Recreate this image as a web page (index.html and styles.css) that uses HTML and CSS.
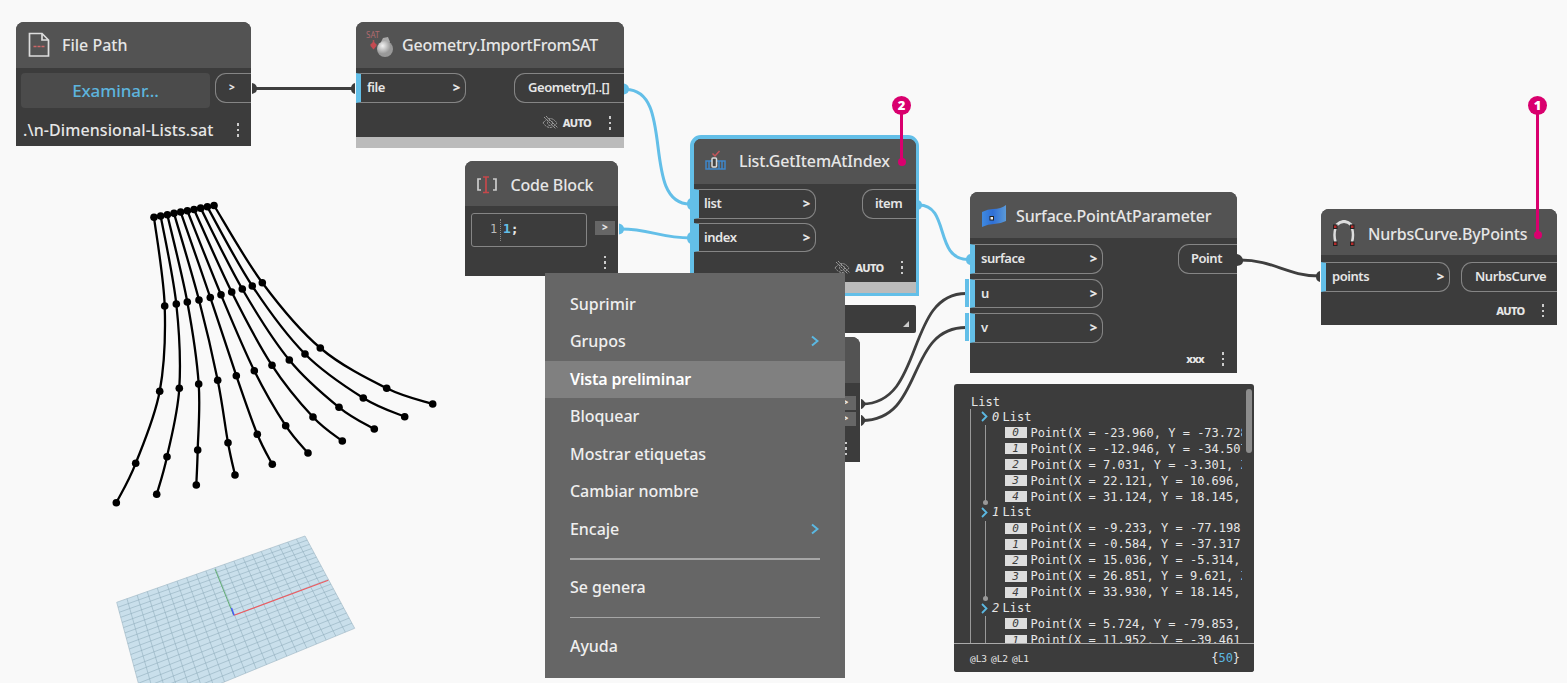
FILE: index.html
```html
<!DOCTYPE html>
<html lang="es">
<head>
<meta charset="utf-8">
<title>Dynamo</title>
<link rel="stylesheet" href="styles.css">
</head>
<body>
<main class="workspace">
  <svg class="layer" viewBox="0 0 1567 683" width="1567" height="683">
    <g id="plane"></g>
    <g id="curves"></g>
    <g class="wires">
      <path d="M253 88.5H354"/>
      <path class="blue" d="M626 89.500C676 89.500 640 204 690 204"/>
      <path class="blue" d="M621 229C650 229 660 238 691 238"/>
      <path class="blue" d="M919 205C950 205 934 259.500 968 259.500"/>
      <path d="M1240 260C1275 260 1286 276 1320 276"/>
      <path d="M862 404C925 404 905 293.500 966 293.500"/>
      <path d="M862 420.500C925 420.500 905 327.500 966 327.500"/>
    </g>
    <g class="nubs">
      <path d="M252 83q5 1 5 5.500t-5 5.500z"/>
      <path d="M355 83q-4 1-4 5.500t4 5.500z"/>
      <path d="M1237 254q5 1 6 6t-6 6z"/>
      <path d="M1320 271q-4 1-4 5.500t4 5.500z"/>
      <path d="M861 399q2 0 5 5q-3 5-5 5z"/>
      <path d="M861 415q2 0 5 5.500q-3 5-5 5.500z"/>
      <path class="blue" d="M624 83.500q5 1 5 5.500t-5 5.500z"/>
      <path class="blue" d="M619 223.500q5 1 5 5.500t-5 5.500z"/>
      <path class="blue" d="M691 198q-4 1-4 6t4 6z"/>
      <path class="blue" d="M691 232q-4 1-4 6t4 6z"/>
      <path class="blue" d="M918 200q4 1 4 5t-4 5z"/>
      <path class="blue" d="M970 254q-4 1-4 5.500t4 5.500z"/>
    </g>
  </svg>

  <section class="node file-path">
    <header class="head">
      <svg class="icon" width="22" height="26" viewBox="0 0 22 26"><path d="M1.500 1.500H14L20.500 8V24H1.500Z M14 1.500V8H20.500" fill="none" stroke="#ddd" stroke-width="1.700"/><path d="M5.500 14.500H17" stroke="#c66" stroke-width="1.500" stroke-dasharray="3 1"/></svg>
      <h2 class="title">File Path</h2>
    </header>
    <div class="path-row"><button class="browse">Examinar...</button><span class="port out arrow">&gt;</span></div>
    <div class="path-foot"><span class="path-text">.\n-Dimensional-Lists.sat</span><i class="dots"></i></div>
  </section>

  <section class="node import-sat">
    <header class="head">
      <svg class="icon" width="32" height="32" viewBox="0 0 32 32"><defs><radialGradient id="ball" cx=".35" cy=".3"><stop offset="0" stop-color="#f2f2f2"/><stop offset="1" stop-color="#999"/></radialGradient></defs><text class="sat" x="0" y="9">SAT</text><path d="M7.500 11v5" stroke="#a55" stroke-width="1.500"/><path d="M4.500 15.500L7.500 12.500L10.500 15.500V17L7.500 20.500L4.500 17Z" fill="#c44a50"/><path d="M15 13l2-4 5-1 2 5-2 3h-7z" fill="#aaa"/><circle cx="19" cy="20" r="8" fill="url(#ball)"/></svg>
      <h2 class="title">Geometry.ImportFromSAT</h2>
    </header>
    <div class="ports"><span class="port in">file<b>&gt;</b></span><span class="port out">Geometry[]..[]</span></div>
    <div class="foot"><svg class="eye" width="16" height="14" viewBox="0 0 16 14"><path d="M1 7Q8-2 15 7Q8 16 1 7Z M2 1L14 13 M4 0L16 12"/><circle cx="8" cy="7" r="2.500"/></svg><strong class="lacing">AUTO</strong><i class="dots"></i></div>
    <div class="shelf"></div>
  </section>

  <section class="node code-block">
    <header class="head">
      <svg class="icon" width="22" height="20" viewBox="0 0 22 20"><path d="M5 4H2V15H5 M17 4H20V15H17" fill="none" stroke="#ccc" stroke-width="1.700"/><path d="M7 2H13M7 17.500H13M10 2V17.500" stroke="#c5484b" stroke-width="1.700"/></svg>
      <h2 class="title">Code Block</h2>
    </header>
    <div class="code-row"><div class="editor"><span class="line-no">1</span><span class="code"><em>1</em>;</span></div><span class="chip">&gt;</span></div>
    <div class="code-foot"><i class="dots"></i></div>
  </section>

  <section class="node get-item">
    <header class="head">
      <svg class="icon" width="22" height="22" viewBox="0 0 22 22"><path d="M1 11H20V19H1Z M4 11V19 M14 11V19 M17 11V19" fill="none" stroke="#3f86c9" stroke-width="1.500"/><rect x="7" y="8" width="4.500" height="9" rx="1" fill="#444" stroke="#ddd" stroke-width="1.500"/><path d="M7.500 3.500L10 6L14.500 1" fill="none" stroke="#c5555a" stroke-width="1.500"/></svg>
      <h2 class="title">List.GetItemAtIndex</h2>
    </header>
    <div class="ports"><div class="inputs"><span class="port in">list<b>&gt;</b></span><span class="port in">index<b>&gt;</b></span></div><span class="port out">item</span></div>
    <div class="foot"><svg class="eye" width="16" height="14" viewBox="0 0 16 14"><path d="M1 7Q8-2 15 7Q8 16 1 7Z M2 1L14 13 M4 0L16 12"/><circle cx="8" cy="7" r="2.500"/></svg><strong class="lacing">AUTO</strong><i class="dots"></i></div>
    <div class="shelf"></div>
  </section>

  <div class="preview-stub"><svg width="6" height="6" viewBox="0 0 6 6"><path d="M6 0V6H0Z" fill="#ccc"/></svg></div>

  <section class="node hidden-block">
    <header class="head"></header>
    <div class="chips"><span class="chip">&gt;</span><span class="chip">&gt;</span></div>
    <div class="code-foot"><i class="dots"></i></div>
  </section>

  <section class="node point-at">
    <header class="head">
      <svg class="icon" width="26" height="24" viewBox="0 0 26 24"><defs><linearGradient id="surf"><stop offset="0" stop-color="#3f8ae0"/><stop offset=".45" stop-color="#2f6fd6"/><stop offset="1" stop-color="#5b9ad8"/></linearGradient></defs><path d="M1 8Q7 5 12 5Q20 5 25 1V17Q19 20 13 20Q7 20 1 23Z" fill="url(#surf)"/><rect x="9" y="12.500" width="3.500" height="3.500" fill="#eee" stroke="#222"/></svg>
      <h2 class="title">Surface.PointAtParameter</h2>
    </header>
    <div class="ports"><div class="inputs"><span class="port in">surface<b>&gt;</b></span><span class="port in default">u<b>&gt;</b></span><span class="port in default">v<b>&gt;</b></span></div><span class="port out">Point</span></div>
    <div class="foot"><strong class="lacing">xxx</strong><i class="dots"></i></div>
  </section>

  <section class="node by-points">
    <header class="head">
      <svg class="icon" width="24" height="28" viewBox="0 0 24 28"><path d="M4.500 5Q12-2 19.500 5" fill="none" stroke="#ddd" stroke-width="3"/><path d="M3.500 8Q1.500 15 3.500 22 M20 8Q22 15 20 22" fill="none" stroke="#ddd" stroke-width="2.500"/><g fill="#b52b2b" stroke="#222"><rect x="1.500" y="5" width="3.500" height="3.500"/><rect x="18.500" y="5" width="3.500" height="3.500"/><rect x="1.500" y="22" width="3.500" height="3.500"/><rect x="18.500" y="22" width="3.500" height="3.500"/></g></svg>
      <h2 class="title">NurbsCurve.ByPoints</h2>
    </header>
    <div class="ports"><span class="port in">points<b>&gt;</b></span><span class="port out">NurbsCurve</span></div>
    <div class="foot"><strong class="lacing">AUTO</strong><i class="dots"></i></div>
  </section>

  <section class="watch">
    <div class="tree">
      <div class="root">List</div>
      <div class="groups">
        <div class="group"><div class="g-head"><svg width="7" height="11" viewBox="0 0 7 11"><path d="M1 1L5.500 5.500L1 10"/></svg><i>0</i>List</div>
          <ol><li><i>0</i>Point(X = -23.960, Y = -73.728</li><li><i>1</i>Point(X = -12.946, Y = -34.507</li><li><i>2</i>Point(X = 7.031, Y = -3.301, Z</li><li><i>3</i>Point(X = 22.121, Y = 10.696,</li><li><i>4</i>Point(X = 31.124, Y = 18.145,</li></ol></div>
        <div class="group"><div class="g-head"><svg width="7" height="11" viewBox="0 0 7 11"><path d="M1 1L5.500 5.500L1 10"/></svg><i>1</i>List</div>
          <ol><li><i>0</i>Point(X = -9.233, Y = -77.198</li><li><i>1</i>Point(X = -0.584, Y = -37.317</li><li><i>2</i>Point(X = 15.036, Y = -5.314,</li><li><i>3</i>Point(X = 26.851, Y = 9.621, Z</li><li><i>4</i>Point(X = 33.930, Y = 18.145,</li></ol></div>
        <div class="group"><div class="g-head"><svg width="7" height="11" viewBox="0 0 7 11"><path d="M1 1L5.500 5.500L1 10"/></svg><i>2</i>List</div>
          <ol><li><i>0</i>Point(X = 5.724, Y = -79.853,</li><li><i>1</i>Point(X = 11.952, Y = -39.461</li></ol></div>
      </div>
    </div>
    <i class="thumb"></i>
    <footer class="levels"><span>@L3</span><span>@L2</span><span>@L1</span><span class="count">{<em>50</em>}</span></footer>
  </section>

  <nav class="menu">
    <div class="item">Suprimir</div>
    <div class="item">Grupos<svg width="8" height="12" viewBox="0 0 8 12"><path d="M1 1.500L6.500 6L1 10.500"/></svg></div>
    <div class="item active">Vista preliminar</div>
    <div class="item">Bloquear</div>
    <div class="item">Mostrar etiquetas</div>
    <div class="item">Cambiar nombre</div>
    <div class="item">Encaje<svg width="8" height="12" viewBox="0 0 8 12"><path d="M1 1.500L6.500 6L1 10.500"/></svg></div>
    <hr>
    <div class="item">Se genera</div>
    <hr>
    <div class="item">Ayuda</div>
  </nav>

  <div class="callout two"><span>2</span></div>
  <div class="callout one"><span>1</span></div>
</main>
<script src="scene.js"></script>
</body>
</html>
```
FILE: styles.css
```css
* { box-sizing: border-box; }
body { margin: 0; background: #f9f9f9; font-family: "Noto Sans", "Open Sans", sans-serif; }
.workspace { position: relative; width: 1567px; height: 683px; overflow: hidden; }
.layer { position: absolute; left: 0; top: 0; }
.wires path { fill: none; stroke: #3f3f3f; stroke-width: 2.8; }
.wires .blue { stroke: #63bfe8; stroke-width: 3; }
.nubs path { fill: #3c3c3c; }
.nubs .blue { fill: #63bfe8; }
.curve { fill: none; stroke: #000; stroke-width: 2.3; }
.plane { fill: #c9dfeb; stroke: #a5bcc8; stroke-width: .7; }
.grid { fill: none; stroke: #8eabba; stroke-width: .55; }

.node { position: absolute; display: flex; flex-direction: column; background: #3c3c3c; border-radius: 8px 8px 0 0; color: #e6e6e6; }
.head { height: 46px; flex: none; background: #535353; border-radius: 8px 8px 0 0; display: flex; align-items: center; }
.title { margin: 0; font-size: 16px; font-weight: 500; letter-spacing: -.17px; line-height: 24px; white-space: nowrap; color: #e6e6e6; }
.icon { flex: none; }
.ports { display: flex; justify-content: space-between; align-items: flex-start; padding-top: 5px; }
.inputs { display: flex; flex-direction: column; gap: 5px; }
.port { height: 29.500px; border: 1.500px solid #858585; display: flex; align-items: center; font-size: 13px; font-weight: 600; letter-spacing: -.45px; line-height: 16px; white-space: nowrap; }
.port.in { width: 110px; border-left: 5px solid #63bfe8; border-radius: 0 11px 11px 0; padding: 0 5px 1px 6px; justify-content: space-between; }
.port.out { border-right: 0; border-radius: 11px 0 0 11px; padding: 0 0 1px 13px; }
.port b { font-size: 13px; }
.default { position: relative; }
.default::before { content: ""; position: absolute; left: -10px; top: -1px; width: 3.500px; height: 28px; background: #63bfe8; }
.foot { display: flex; align-items: center; justify-content: flex-end; height: 34px; padding: 6px 13px 0 0; }
.lacing { font-size: 11px; font-weight: 800; letter-spacing: -.7px; margin: 0 17.500px 0 5px; line-height: 14px; }
.eye { fill: none; stroke: #999; stroke-width: 1; stroke-dasharray: 2.500 .8; }
.dots { width: 2px; height: 14px; flex: none; background: linear-gradient(#ccc 0 2.500px, transparent 2.500px 5.500px, #ccc 5.500px 8px, transparent 8px 11px, #ccc 11px 13.500px, transparent 13.500px); }
.shelf { height: 11px; flex: none; background: #bbb; margin-top: auto; }

.file-path { left: 16px; top: 22px; width: 235px; height: 124px; }
.file-path .head { padding-left: 12px; gap: 12px; }
.file-path .title { letter-spacing: 0; }
.path-row { display: flex; justify-content: space-between; padding: 5px 0 0 5px; }
.browse { width: 189px; height: 35px; border: 0; border-radius: 4px; background: #4b4b4b; color: #5db4dd; font: 500 17px/32px "Noto Sans", sans-serif; padding: 0; letter-spacing: -.1px; }
.port.arrow { width: 36px; padding-left: 13px; font-size: 10px; font-weight: 800; }
.path-foot { display: flex; justify-content: space-between; align-items: center; padding: 7px 12.500px 0 7px; font-size: 16px; font-weight: 500; line-height: 30px; }
.path-text { letter-spacing: .08px; }

.import-sat { left: 356px; top: 22px; width: 267.500px; height: 126px; }
.import-sat .head { padding-left: 10px; gap: 4px; }
.import-sat .title { letter-spacing: -.2px; }
.sat { font: 8px "Noto Sans", sans-serif; fill: #b06a6e; }
.import-sat .out { width: 109.500px; }

.code-block { left: 465px; top: 161px; width: 153px; height: 115px; }
.code-block .head { height: 45px; padding: 2px 0 0 11px; gap: 12.500px; }
.code-row { display: flex; gap: 8px; padding: 7px 0 0 6px; }
.editor { width: 116px; height: 34px; border: 1.500px solid #858585; border-radius: 3px; padding: 5px 0 0 18px; font: 12px/20px "DejaVu Sans Mono", monospace; display: flex; }
.line-no { color: #bbb; width: 11px; border-right: 1px dotted #888; height: 22px; }
.code { padding-left: 2px; font-weight: 700; font-size: 13px; }
.code em { font-style: normal; color: #63bfe8; }
.chip { width: 20px; height: 14px; background: #666; margin-top: 7.500px; font-size: 10px; font-weight: 800; line-height: 13px; text-align: center; }
.code-foot { display: flex; justify-content: flex-end; padding: 9px 12.500px 0 0; }

.get-item { left: 690px; top: 135px; width: 229px; height: 161px; border: 4px solid #63bfe8; border-right-width: 3px; border-bottom-width: 3px; border-radius: 11px 11px 0 0; }
.get-item .head { height: 45px; padding: 0 0 2px 11px; gap: 12px; border-radius: 7px 7px 0 0; }
.get-item .title { letter-spacing: -.12px; }
.get-item .inputs { gap: 4px; }
.get-item .in { width: 122px; padding-left: 5px; }
.get-item .out { width: 54px; padding-left: 12px; }
.get-item .foot { height: 29px; padding: 2px 13px 0 0; }

.preview-stub { position: absolute; left: 700px; top: 305px; width: 216px; height: 28px; background: #3c3c3c; border-radius: 2px; display: flex; justify-content: flex-end; align-items: flex-end; padding: 0 7px 6px 0; }

.hidden-block { left: 700px; top: 337px; width: 159.500px; height: 125px; }
.chips { display: flex; flex-direction: column; align-items: flex-end; gap: 2px; padding: 13px 4px 0 0; }
.chips .chip { margin: 0; }
.hidden-block .code-foot { padding-top: 16px; }

.point-at { left: 970px; top: 192px; width: 267px; height: 181px; }
.point-at .head { padding: 2px 0 0 11px; gap: 9px; }
.point-at .ports { padding-top: 6px; }
.point-at .in { width: 133px; }
.point-at .out { width: 59px; padding-left: 12px; }
.point-at .foot { height: 28px; padding-top: 4px; }
.point-at .lacing { margin-right: 18px; }

.by-points { left: 1321px; top: 209px; width: 236px; height: 115.500px; }
.by-points .head { padding: 3px 0 0 11px; gap: 12px; }
.by-points .ports { padding-top: 7px; }
.by-points .in { width: 129px; }
.by-points .out { width: 96px; }
.by-points .foot { height: 32px; }

.watch { position: absolute; left: 954px; top: 384px; width: 300px; height: 288px; background: #3c3c3c; border-radius: 3px; color: #e6e6e6; font: 12px/16px "DejaVu Sans Mono", monospace; }
.tree { height: 259px; width: 289px; padding: 10px 0 0 16px; overflow: hidden; }
.root { letter-spacing: .05px; height: 15px; padding-left: 1px; }
.groups { border-left: 1px solid #999; padding-left: 10px; }
.group { position: relative; }
.group::before { content: ""; position: absolute; left: 4px; top: 16px; height: 78px; border-left: 1px solid #999; }
.group::after { content: ""; position: absolute; left: 2px; top: 91px; width: 5px; height: 5px; border-radius: 50%; background: #999; }
.g-head { display: flex; align-items: center; height: 15.500px; }
.g-head svg { fill: none; stroke: #5bb8e2; stroke-width: 1.800; margin-right: 4px; }
.g-head i { width: 10.500px; }
.group ol { list-style: none; margin: 0; padding: 0 0 0 23.500px; }
.group li { display: flex; align-items: center; gap: 4px; white-space: nowrap; height: 16.050px; width: 237px; overflow: hidden; letter-spacing: .02px; }
.group li i { flex: none; width: 22px; height: 11px; line-height: 11px; background: #ddd; color: #3c3c3c; font-size: 11px; text-align: center; }
.thumb { position: absolute; right: 2px; top: 5px; width: 6px; height: 64px; border-radius: 3px; background: #8c8c8c; }
.levels { position: relative; height: 29px; border-top: 1.500px solid #aaa; background: #3c3c3c; display: flex; gap: 4px; padding: 7px 14px 0 16px; font-size: 9.500px; letter-spacing: -.05px; border-radius: 0 0 3px 3px; }
.count { margin-left: auto; font-size: 12px; line-height: 15px; }
.count em { font-style: normal; color: #5bb8e2; }

.menu { position: absolute; left: 545px; top: 273px; width: 299.500px; height: 405px; background: #666; padding-top: 12.500px; color: #efefef; font-size: 16px; font-weight: 500; letter-spacing: -.04px; }
.item { display: flex; align-items: center; justify-content: space-between; height: 37.500px; padding: 0 25px 1.500px; }
.item svg { fill: none; stroke: #5bb8e2; stroke-width: 2; margin-right: 1px; }
.active { background: #808080; color: #fff; font-weight: 600; letter-spacing: -.18px; }
.menu hr { border: 0; height: 1.500px; background: #a6a6a6; margin: 10px 25px 9.500px; }

.callout { position: absolute; width: 19px; }
.callout span { display: block; width: 19px; height: 19px; border-radius: 50%; background: #d9006e; color: #fff; font: 800 13px/19px "Open Sans", sans-serif; text-align: center; position: relative; z-index: 1; }
.callout::before { content: ""; position: absolute; left: 8px; top: 10px; bottom: 3px; width: 3px; background: #d9006e; }
.callout::after { content: ""; position: absolute; left: 5.500px; bottom: 0; width: 8px; height: 8px; border-radius: 50%; background: #d9006e; }
.two { left: 892px; top: 96px; height: 70px; }
.one { left: 1528px; top: 96px; height: 143px; }
```
FILE: scene.js
```js
const NS = "http://www.w3.org/2000/svg";
const add = (parent, tag, attrs) => {
  const el = document.createElementNS(NS, tag);
  for (const k in attrs) el.setAttribute(k, attrs[k]);
  parent.appendChild(el);
};

// Rows of surface points, ordered from the top edge down; one curve per column.
const rows = [
  Array.from({ length: 10 }, (_, i) => [154 + i * 6.67, 217.3 - i * 1.31]),
  [[164.7,306],[176.3,304],[187.3,302],[199,300],[210.3,297.5],[221,294.7],[231.7,292],[242.3,289],[252.3,286],[262.3,282.7]],
  [[159.7,391.3],[179.3,388.3],[198.7,384],[217.7,380.3],[236.3,375.7],[254.3,370.7],[272,365.3],[289.3,360],[305,354],[320.3,348]],
  [[135.7,463.3],[167,456.7],[197.7,450],[228,442.7],[257.3,434.3],[285.7,425.7],[313,417],[339,407.3],[363.3,398],[386.7,388.3]],
  [[116.3,502.7],[156.7,494.3],[196.3,485],[235,475],[272.3,464.3],[308,453],[342.3,441],[374.3,429],[404.7,416.7],[432.7,404]]
];
const curves = document.getElementById("curves");
for (let c = 0; c < 10; c++) {
  const p = rows.map(r => r[c]);
  let d = `M${p[0]}`;
  for (let i = 0; i < p.length - 1; i++) {
    const a = p[i - 1] || p[i], b = p[i], e = p[i + 1], f = p[i + 2] || e;
    d += `C${b[0] + (e[0] - a[0]) / 6} ${b[1] + (e[1] - a[1]) / 6} ${e[0] - (f[0] - b[0]) / 6} ${e[1] - (f[1] - b[1]) / 6} ${e}`;
  }
  add(curves, "path", { d, class: "curve" });
  p.forEach(([x, y]) => add(curves, "circle", { cx: x, cy: y, r: 3.8 }));
}

// Ground plane: projective mapping of the unit square onto its four corners.
const [A, B, C, D] = [[116.7,602.3],[305,536],[354.7,628.3],[146.6,713.9]];
const dx1 = B[0] - C[0], dx2 = D[0] - C[0], dx3 = A[0] - B[0] + C[0] - D[0];
const dy1 = B[1] - C[1], dy2 = D[1] - C[1], dy3 = A[1] - B[1] + C[1] - D[1];
const det = dx1 * dy2 - dx2 * dy1;
const g = (dx3 * dy2 - dx2 * dy3) / det, h = (dx1 * dy3 - dx3 * dy1) / det;
const map = (u, v) => {
  const w = g * u + h * v + 1;
  return [0, 1].map(k => ((B[k] - A[k] + g * B[k]) * u + (D[k] - A[k] + h * D[k]) * v + A[k]) / w);
};
const plane = document.getElementById("plane");
add(plane, "polygon", { points: [A, B, C, D].join(" "), class: "plane" });
for (let i = 1; i < 20; i++) {
  const t = i / 20;
  add(plane, "path", { d: `M${map(t, 0)}L${map(t, 1)}M${map(0, t)}L${map(1, t)}`, class: "grid" });
}
add(plane, "path", { d: "M233.500 615L215 569", stroke: "#62ad73", "stroke-width": 1 });
add(plane, "path", { d: "M234 615.300L328.300 580.300", stroke: "#ee5a5f", "stroke-width": 1.2 });
add(plane, "path", { d: "M234 615.300L231.500 608", stroke: "#4455ff", "stroke-width": 1.3 });
```
